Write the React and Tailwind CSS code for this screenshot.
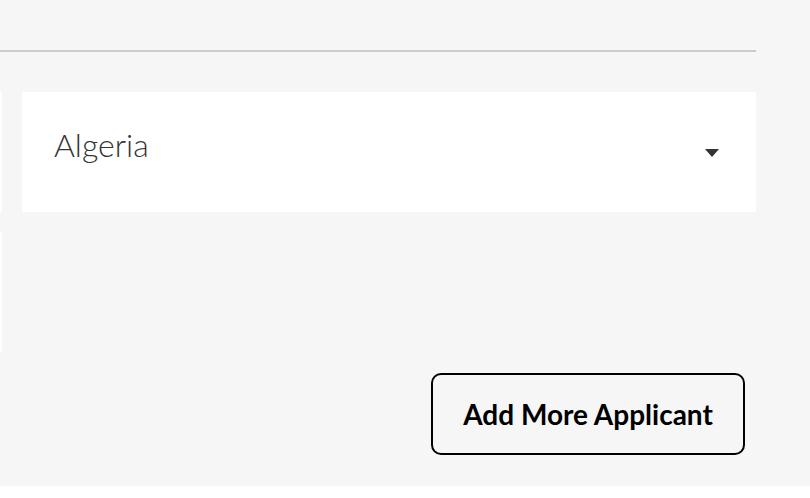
export default function App() {
    return (
        <div className="w-[810px] bg-white font-['Lato',sans-serif]">
            <div className="h-[486px] bg-[#f6f6f6] pt-[50px] overflow-hidden">
                <div className="w-[756px] h-[2px] bg-[#cccccc]" />

                <div className="flex gap-[20px] mt-[40px] w-[756px]">
                    {/* left column, mostly out of view */}
                    <div className="w-[2px] flex flex-col gap-[20px]">
                        <div className="h-[120px] bg-white" />
                        <div className="h-[120px] bg-white" />
                    </div>

                    <div className="flex-1 flex flex-col">
                        <div className="h-[120px] bg-white flex justify-between pl-[32px] pr-[37px]">
                            <span className="mt-[34px] text-[32px] leading-[38px] font-light text-[#333333]">Algeria</span>
                            <span className="self-center mt-[1px] w-0 h-0 border-x-[7px] border-x-transparent border-t-[8px] border-t-[#333333]" />
                        </div>
                    </div>
                </div>

                <div className="w-[756px] flex justify-end pr-[11px] mt-[21px]">
                    <button className="w-[314px] h-[82px] border-2 border-black rounded-[10px] text-[28px] font-bold text-black leading-none">
                        Add More Applicant
                    </button>
                </div>
            </div>
            <div className="h-[12px]" />
        </div>
    );
}
